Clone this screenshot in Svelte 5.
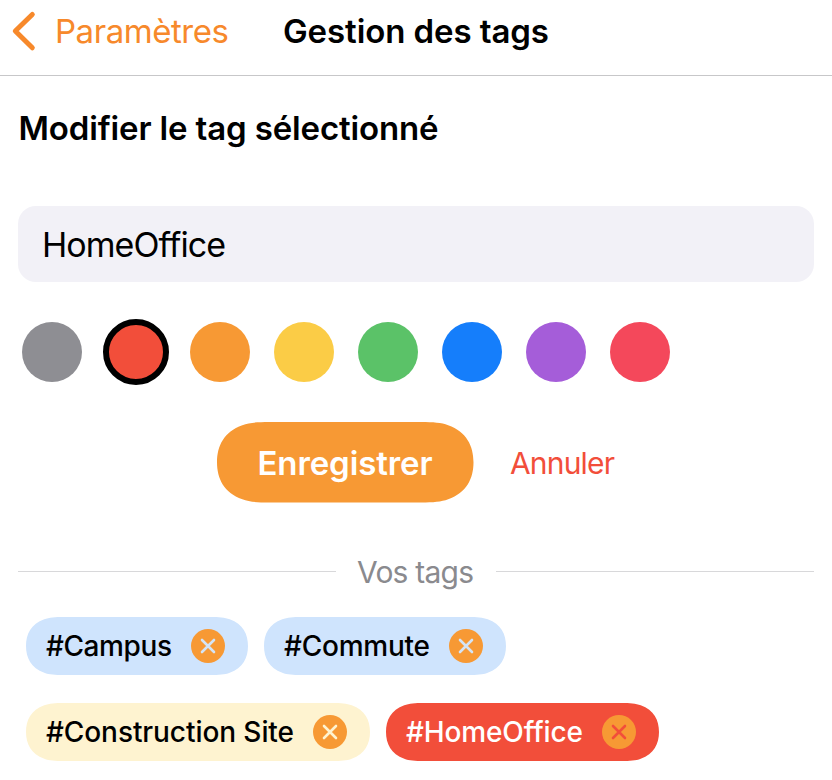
<script>
  const colors = ['#8e8e93', '#f24e3a', '#f79934', '#fbcc46', '#5bc268', '#157efb', '#a55dd9', '#f4485b'];
  const tags = [
    { name: '#Campus', tone: 'blue', w: 222, tw: 126 },
    { name: '#Commute', tone: 'blue', w: 242, tw: 146 },
    { name: '#Construction Site', tone: 'yellow', w: 344, tw: 248 },
    { name: '#HomeOffice', tone: 'red', w: 273, tw: 177 }
  ];
  let selected = $state(1);
  let name = 'HomeOffice';

  // Capsule outline with continuous curvature at the ends.
  function capsule(w, h) {
    const r = h / 2;
    const a = r * 1.3, b = r * 0.8, c = r * 0.63, d = r * 0.17;
    return `M${a} 0H${w - a}C${w - r} 0 ${w - b} ${r * 0.015} ${w - c} ${r * 0.08}C${w - d} ${r * 0.24} ${w} ${r * 0.6} ${w} ${r}C${w} ${r * 1.4} ${w - d} ${r * 1.76} ${w - c} ${r * 1.92}C${w - b} ${r * 1.985} ${w - r} ${h} ${w - a} ${h}H${a}C${r} ${h} ${b} ${r * 1.985} ${c} ${r * 1.92}C${d} ${r * 1.76} 0 ${r * 1.4} 0 ${r}C0 ${r * 0.6} ${d} ${r * 0.24} ${c} ${r * 0.08}C${b} ${r * 0.015} ${r} 0 ${a} 0Z`;
  }
</script>

<div class="screen">
  <header>
    <div class="back">
      <svg width="24" height="40" viewBox="0 0 24 40"><path d="M20.3 3.5 3.3 20 20.3 36.8" fill="none" stroke="#f7892b" stroke-width="5" stroke-linecap="round" stroke-linejoin="round" /></svg>
      <svg class="label" width="174" height="48"><text x="0" y="33" textLength="174">Paramètres</text></svg>
    </div>
    <svg class="title" width="266" height="48"><text x="0" y="33" textLength="266">Gestion des tags</text></svg>
  </header>
  <main>
    <h1><svg width="420" height="48"><text x="0.5" y="33" textLength="420">Modifier le tag sélectionné</text></svg></h1>
    <div class="field"><svg width="184" height="48"><text x="-1" y="34" textLength="184">{name}</text></svg></div>
    <div class="palette">
      {#each colors as c, i}
        <button class="dot" class:selected={i === selected} style:background={c} aria-label="Couleur {i + 1}" onclick={() => (selected = i)}></button>
      {/each}
    </div>
    <div class="actions">
      <button class="save" style:clip-path="path('{capsule(256.5, 80.5)}')"><svg width="176" height="48"><text x="-0.5" y="35.5" textLength="175">Enregistrer</text></svg></button>
      <button class="cancel"><svg width="106" height="48"><text x="0" y="35" textLength="105">Annuler</text></svg></button>
    </div>
    <div class="divider"><span></span><svg width="118" height="40"><text x="0" y="31.5" textLength="117">Vos tags</text></svg><span></span></div>
    <div class="tags">
      {#each tags as t}
        <div class="tag {t.tone}" style:width="{t.w}px" style:clip-path="path('{capsule(t.w, 58)}')">
          <svg width={t.tw} height="40"><text x="0" y="30" textLength={t.tw}>{t.name}</text></svg>
          <svg class="remove" width="34" height="34" viewBox="0 0 34 34"><circle cx="17" cy="17" r="17" /><path d="M11 11 23 23M23 11 11 23" /></svg>
        </div>
      {/each}
    </div>
  </main>
</div>

<style>
  :global(body) { background: #fff; }
  .screen { width: 832px; height: 780px; overflow: hidden; box-sizing: border-box; font-family: Inter, sans-serif; background: #fff; color: #000; }
  svg { display: block; overflow: visible; flex: none; }
  text { fill: currentColor; }
  button { border: 0; padding: 0; font: inherit; color: inherit; }
  header { height: 76px; box-sizing: border-box; border-bottom: 1px solid #c7c7c9; display: flex; padding: 11px 0 0 12px; }
  .back { display: flex; width: 271px; gap: 19px; color: #f7892b; font-size: 33px; }
  .label, .title { margin-top: -1px; }
  .title { font-size: 33px; font-weight: 600; }
  main { padding: 31px 18px 0; }
  h1 { margin: 0; height: 99px; font-size: 33px; font-weight: 600; }
  .field { height: 76px; box-sizing: border-box; border-radius: 18px; background: #f2f1f7; padding: 17px 25px; font-size: 34px; }
  .palette { display: flex; gap: 24px; padding: 40px 4px 0; }
  .dot { width: 60px; height: 60px; border-radius: 50%; }
  .selected { outline: 6px solid #000; outline-offset: -3px; }
  .actions { display: flex; align-items: center; margin: 40px 0 0 199px; height: 81px; gap: 36px; }
  .save { width: 257px; height: 81px; background: #f79934; color: #fff; padding-left: 41px; font-size: 33px; font-weight: 600; }
  .cancel { background: none; color: #f24e3a; font-size: 30px; }
  .divider { display: flex; align-items: center; height: 40px; margin-top: 48px; gap: 21px; color: #8a8a8e; font-size: 30px; }
  .divider span { height: 1px; flex: 1; background: #d8d8da; }
  .tags { display: flex; flex-wrap: wrap; gap: 28px 16px; padding: 26px 8px 0; }
  .tag { box-sizing: border-box; height: 58px; display: flex; align-items: center; padding-left: 20px; gap: 19px; font-size: 28px; font-weight: 500; }
  .blue { background: #cfe4fd; }
  .yellow { background: #fef3d0; }
  .red { background: #f24e3a; color: #fff; }
  .remove circle { fill: #f79934; }
  .remove path { fill: none; stroke: #d4e4f5; stroke-width: 2.6; stroke-linecap: round; }
  .yellow .remove path { stroke: #fef3d0; }
  .red .remove path { stroke: #f24e3a; }
</style>
